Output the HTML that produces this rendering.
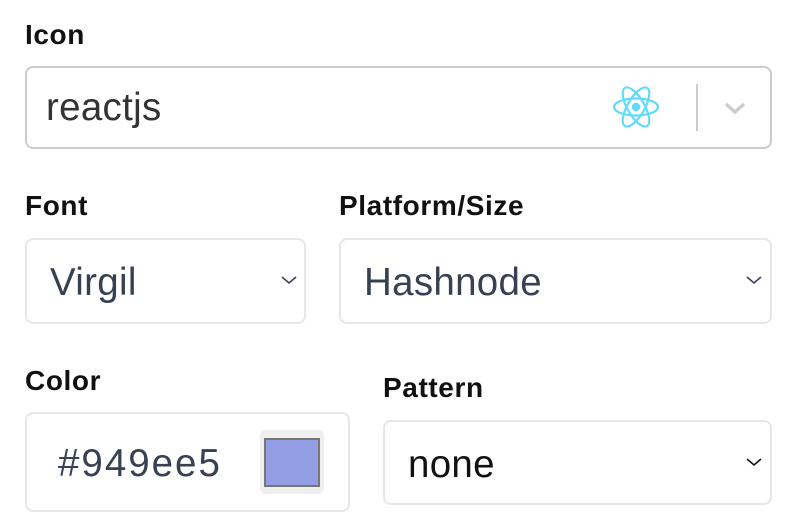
<!DOCTYPE html>
<html><head><meta charset="utf-8"><style>
body{margin:0;width:796px;height:532px;background:#fff;position:relative;font-family:"Liberation Sans",sans-serif;overflow:hidden}
.l{position:absolute;font-size:28px;color:#111;font-weight:bold;letter-spacing:0.6px}
.b{position:absolute;box-sizing:border-box;border:2px solid #e5e7eb;border-radius:8px;background:#fff}
.t{position:absolute;font-size:38.5px;color:#374151;line-height:1;letter-spacing:0.3px}
.chev{position:absolute}
</style></head><body>
<div class="l" style="left:25px;top:19px">Icon</div>
<div class="b" style="left:25px;top:66px;width:747px;height:83px;border-color:#ccc"></div>
<div class="t" style="left:46px;top:89px;color:#333">reactjs</div>
<svg style="position:absolute;left:612px;top:84px" width="48" height="46" viewBox="-24 -23 48 46">
<g fill="none" stroke="#61dafb" stroke-width="2.2">
<ellipse rx="22" ry="8.5"/><ellipse rx="22" ry="8.5" transform="rotate(60)"/><ellipse rx="22" ry="8.5" transform="rotate(120)"/></g>
<circle r="4.2" fill="#61dafb"/></svg>
<div style="position:absolute;left:696px;top:84px;width:2px;height:47px;background:#ccc"></div>
<svg class="chev" style="left:723px;top:101px" width="24" height="14" viewBox="0 0 24 14"><path d="M3 3l9 8 9-8" fill="none" stroke="#ccc" stroke-width="3.5"/></svg>

<div class="l" style="left:25px;top:190px">Font</div>
<div class="b" style="left:25px;top:238px;width:281px;height:86px"></div>
<div class="t" style="left:50px;top:264px">Virgil</div>
<svg class="chev" style="left:280px;top:274px" width="18" height="12" viewBox="0 0 18 12"><path d="M2 3l7 6 7-6" fill="none" stroke="#374151" stroke-width="1.6"/></svg>

<div class="l" style="left:339px;top:190px">Platform/Size</div>
<div class="b" style="left:339px;top:238px;width:433px;height:86px"></div>
<div class="t" style="left:364px;top:264px">Hashnode</div>
<svg class="chev" style="left:745px;top:274px" width="18" height="12" viewBox="0 0 18 12"><path d="M2 3l7 6 7-6" fill="none" stroke="#374151" stroke-width="1.6"/></svg>

<div class="l" style="left:25px;top:365px">Color</div>
<div class="b" style="left:25px;top:412px;width:325px;height:100px"></div>
<div class="t" style="left:58px;top:445px;letter-spacing:2px">#949ee5</div>
<div style="position:absolute;left:260px;top:430px;width:64px;height:64px;background:#efefef;border-radius:6px"></div>
<div style="position:absolute;left:264px;top:438px;width:56px;height:49px;box-sizing:border-box;border:2px solid #767676;background:#949ee5"></div>

<div class="l" style="left:383px;top:372px">Pattern</div>
<div class="b" style="left:383px;top:420px;width:389px;height:85px"></div>
<div class="t" style="left:408px;top:446px;color:#111">none</div>
<svg class="chev" style="left:745px;top:456px" width="18" height="12" viewBox="0 0 18 12"><path d="M2 3l7 6 7-6" fill="none" stroke="#111" stroke-width="1.6"/></svg>
</body></html>
